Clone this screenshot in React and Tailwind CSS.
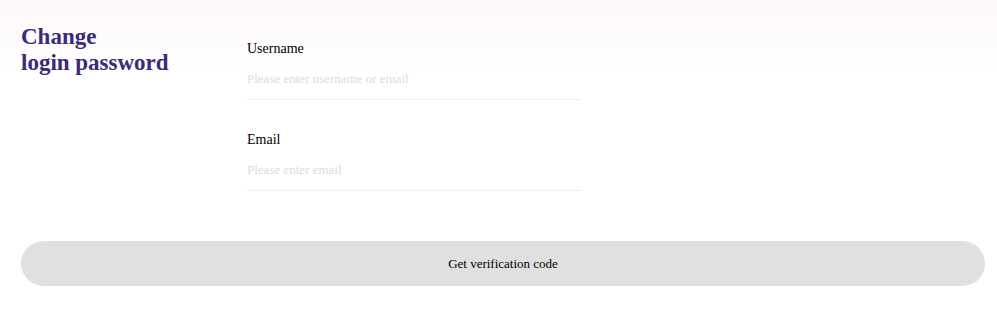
import React from "react";

function Field({ label, placeholder, className = "" }) {
  return (
    <div className={"flex flex-col " + className}>
      <label className="h-5 text-[14px] leading-5 text-black">{label}</label>
      <input
        className="h-[41px] w-full border-b border-[#eeeeee] bg-transparent text-[13px] text-black outline-none placeholder:text-[#dcdcdc]"
        placeholder={placeholder}
      />
    </div>
  );
}

export default function App() {
  return (
    <div
      className="min-h-[335px] w-full bg-[linear-gradient(to_bottom,#fdf7f9_0px,#fefbfc_40px,#ffffff_75px)] pl-[21px] pr-[12px] pt-[24px]"
      style={{ fontFamily: '"Liberation Serif", "Times New Roman", serif' }}
    >
      <div className="flex items-start">
        <h1 className="w-[226px] shrink-0 text-[23px] font-bold leading-[26px] text-[#3b2a7c]">
          Change
          <br />
          login password
        </h1>
        <div className="mt-[15px] flex w-[334px] flex-col gap-[30px]">
          <Field label="Username" placeholder="Please enter username or email" />
          <Field label="Email" placeholder="Please enter email" />
        </div>
      </div>
      <button className="mt-[50px] flex h-[45px] w-full items-center justify-center rounded-full bg-[#e0e0e0] text-[13px] text-black">
        Get verification code
      </button>
    </div>
  );
}
